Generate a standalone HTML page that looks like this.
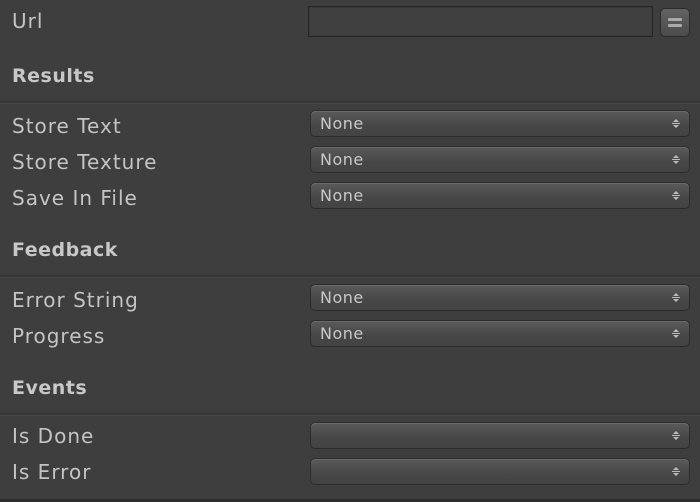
<!DOCTYPE html>
<html><head><style>
body{margin:0;width:700px;height:502px;background:#3e3e3e;font-family:"DejaVu Sans","Liberation Sans",sans-serif;overflow:hidden;position:relative}
.l{position:absolute;left:12px;color:#c4c4c4;font-size:20px;letter-spacing:1px;line-height:24px}
.h{position:absolute;left:12px;color:#c8c8c8;font-size:19px;letter-spacing:0.5px;font-weight:bold;line-height:24px}
.sep{position:absolute;left:0;width:700px;height:2px;background:#363636;border-bottom:1px solid #474747}
.dd{position:absolute;left:310px;width:378px;height:25px;border-radius:5px;background:linear-gradient(#5a5a5a,#474747 60%,#434343);border:1px solid #2c2c2c;box-shadow:inset 0 1px 0 #6a6a6a;color:#c8c8c8;font-size:16px;letter-spacing:0.5px;line-height:25px;box-sizing:content-box}
.dd span{padding-left:9px}
.dd i{position:absolute;display:block;right:9px;top:6px;width:8px;height:13px}
.dd i svg{display:block}
</style></head><body>
<div class="l" style="top:9px">Url</div>
<div style="position:absolute;left:308px;top:6px;width:343px;height:29px;background:#404040;border:1px solid #262626;box-shadow:inset 0 0 0 1px #3a3a3a"></div>
<div style="position:absolute;left:660px;top:8px;width:30px;height:29px;border-radius:5px;background:linear-gradient(#636363,#4b4b4b);border:1px solid #2c2c2c;box-sizing:border-box">
<div style="position:absolute;left:7px;top:9px;width:14px;height:3px;background:#aaa;border-radius:1px"></div>
<div style="position:absolute;left:7px;top:15px;width:14px;height:3px;background:#aaa;border-radius:1px"></div></div>
<div class="h" style="top:64px">Results</div>
<div class="sep" style="top:101px"></div>
<div class="l" style="top:114px">Store Text</div>
<div class="l" style="top:150px">Store Texture</div>
<div class="l" style="top:186px">Save In File</div>
<div class="h" style="top:238px">Feedback</div>
<div class="sep" style="top:275px"></div>
<div class="l" style="top:288px">Error String</div>
<div class="l" style="top:324px">Progress</div>
<div class="h" style="top:376px">Events</div>
<div class="sep" style="top:413px"></div>
<div class="l" style="top:424px">Is Done</div>
<div class="l" style="top:460px">Is Error</div>
<div style="position:absolute;left:0;top:499px;width:700px;height:3px;background:#2f2f2f"></div>

<div class="dd" style="top:110px"><span>None</span><i><svg width="8" height="13"><path d="M1 5L4 2L7 5Z M1 8L4 11L7 8Z" fill="#bbb"/><rect x="0" y="6" width="8" height="1" fill="#bbb"/></svg></i></div>
<div class="dd" style="top:146px"><span>None</span><i><svg width="8" height="13"><path d="M1 5L4 2L7 5Z M1 8L4 11L7 8Z" fill="#bbb"/><rect x="0" y="6" width="8" height="1" fill="#bbb"/></svg></i></div>
<div class="dd" style="top:182px"><span>None</span><i><svg width="8" height="13"><path d="M1 5L4 2L7 5Z M1 8L4 11L7 8Z" fill="#bbb"/><rect x="0" y="6" width="8" height="1" fill="#bbb"/></svg></i></div>
<div class="dd" style="top:284px"><span>None</span><i><svg width="8" height="13"><path d="M1 5L4 2L7 5Z M1 8L4 11L7 8Z" fill="#bbb"/><rect x="0" y="6" width="8" height="1" fill="#bbb"/></svg></i></div>
<div class="dd" style="top:320px"><span>None</span><i><svg width="8" height="13"><path d="M1 5L4 2L7 5Z M1 8L4 11L7 8Z" fill="#bbb"/><rect x="0" y="6" width="8" height="1" fill="#bbb"/></svg></i></div>
<div class="dd" style="top:422px"><span></span><i><svg width="8" height="13"><path d="M1 5L4 2L7 5Z M1 8L4 11L7 8Z" fill="#bbb"/><rect x="0" y="6" width="8" height="1" fill="#bbb"/></svg></i></div>
<div class="dd" style="top:458px"><span></span><i><svg width="8" height="13"><path d="M1 5L4 2L7 5Z M1 8L4 11L7 8Z" fill="#bbb"/><rect x="0" y="6" width="8" height="1" fill="#bbb"/></svg></i></div>
</body></html>
